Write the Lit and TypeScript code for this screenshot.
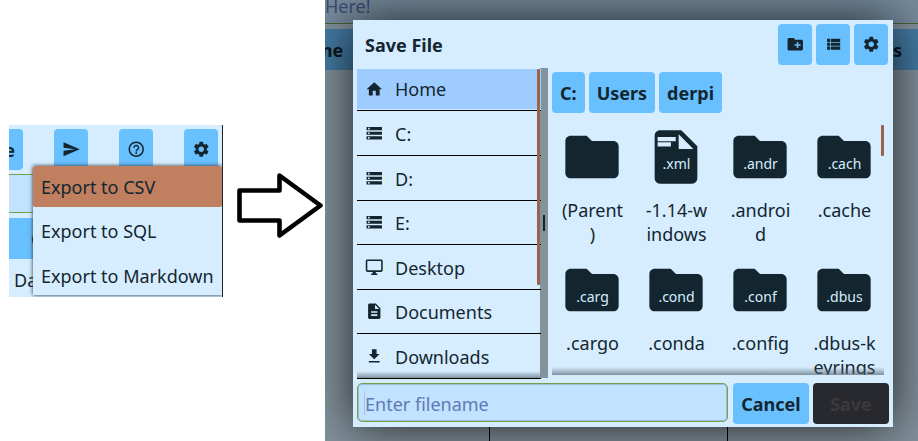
import { LitElement, html, css, svg } from "lit";
import { customElement, property } from "lit/decorators.js";

const ICONS: Record<string, string> = {
  home: "M10 20v-6h4v6h5v-8h3L12 3 2 12h3v8z",
  storage:
    "M2 20h20v-4H2v4zm2-3h2v2H4v-2zM2 4v4h20V4H2zm4 3H4V5h2v2zm-4 7h20v-4H2v4zm2-3h2v2H4v-2z",
  desktop:
    "M21 2H3c-1.1 0-2 .9-2 2v12c0 1.1.9 2 2 2h7v2H8v2h8v-2h-2v-2h7c1.1 0 2-.9 2-2V4c0-1.1-.9-2-2-2zm0 14H3V4h18v12z",
  document:
    "M14 2H6c-1.1 0-1.99.9-1.99 2L4 20c0 1.1.89 2 1.99 2H18c1.1 0 2-.9 2-2V8l-6-6zm2 16H8v-2h8v2zm0-4H8v-2h8v2zm-3-5V3.5L18.5 9H13z",
  download: "M19 9h-4V3H9v6H5l7 7 7-7zM5 18v2h14v-2H5z",
  send: "M2.01 21L23 12 2.01 3 2 10l15 2-15 2z",
  help: "M11 18h2v-2h-2v2zm1-16C6.48 2 2 6.48 2 12s4.48 10 10 10 10-4.48 10-10S17.52 2 12 2zm0 18c-4.41 0-8-3.59-8-8s3.59-8 8-8 8 3.59 8 8-3.59 8-8 8zm0-14c-2.21 0-4 1.79-4 4h2c0-1.1.9-2 2-2s2 .9 2 2c0 2-3 1.75-3 5h2c0-2.25 3-2.5 3-5 0-2.21-1.79-4-4-4z",
  settings:
    "M19.14 12.94c.04-.3.06-.61.06-.94 0-.32-.02-.64-.07-.94l2.03-1.58c.18-.14.23-.41.12-.61l-1.92-3.32c-.12-.22-.37-.29-.59-.22l-2.39.96c-.5-.38-1.03-.7-1.62-.94l-.36-2.54c-.04-.24-.24-.41-.48-.41h-3.84c-.24 0-.43.17-.47.41l-.36 2.54c-.59.24-1.13.57-1.62.94l-2.39-.96c-.22-.08-.47 0-.59.22L2.74 8.87c-.12.21-.08.47.12.61l2.03 1.58c-.05.3-.09.63-.09.94s.02.64.07.94l-2.03 1.58c-.18.14-.23.41-.12.61l1.92 3.32c.12.22.37.29.59.22l2.39-.96c.5.38 1.03.7 1.62.94l.36 2.54c.05.24.24.41.48.41h3.84c.24 0 .44-.17.47-.41l.36-2.54c.59-.24 1.13-.56 1.62-.94l2.39.96c.22.08.47 0 .59-.22l1.92-3.32c.12-.22.07-.47-.12-.61l-2.01-1.58zM12 15.6c-1.98 0-3.6-1.62-3.6-3.6s1.62-3.6 3.6-3.6 3.6 1.62 3.6 3.6-1.62 3.6-3.6 3.6z",
  newFolder:
    "M20 6h-8l-2-2H4c-1.11 0-1.99.89-1.99 2L2 18c0 1.11.89 2 2 2h16c1.11 0 2-.89 2-2V8c0-1.11-.89-2-2-2zm-1 8h-3v3h-2v-3h-3v-2h3V9h2v3h3v2z",
  list: "M4 14h4v-4H4v4zm0 5h4v-4H4v4zM4 9h4V5H4v4zm5 5h12v-4H9v4zm0 5h12v-4H9v4zM9 5v4h12V5H9z",
  folder:
    "M10 4H4c-1.1 0-1.99.9-1.99 2L2 18c0 1.1.9 2 2 2h16c1.1 0 2-.9 2-2V8c0-1.1-.9-2-2-2h-8l-2-2z",
  file: "M14 2H6c-1.1 0-2 .9-2 2v16c0 1.1.9 2 2 2h12c1.1 0 2-.9 2-2V8l-6-6zM13 9V3.5L18.5 9H13zM5.1 4.5v1.6h6.8V4.5zM5.1 6.5v1.6h5V6.5z",
};

@customElement("ui-icon")
class UiIcon extends LitElement {
  @property() name = "home";
  static styles = css`
    :host { display: block; flex: none; width: 18.5px; height: 18.5px; color: #13262f; }
    svg { display: block; width: 100%; height: 100%; fill: currentColor; }
  `;
  render() {
    return html`<svg viewBox="0 0 24 24">${svg`<path fill-rule="evenodd" d=${ICONS[this.name]} />`}</svg>`;
  }
}

@customElement("export-panel")
class ExportPanel extends LitElement {
  static styles = css`
    :host {
      display: block; position: relative; box-sizing: border-box; overflow: hidden;
      width: 214px; height: 172px; background: #d6edff; border-right: 1px solid #1c2429;
    }
    .bar { display: flex; gap: 31px; padding-top: 4px; }
    .btn {
      box-sizing: border-box; width: 34px; height: 41px; border-radius: 4px; background: #69c0ff;
      display: flex; align-items: center; justify-content: center; padding-bottom: 1px;
    }
    .btn.cut {
      width: 14px; border-radius: 0 4px 4px 0; font-weight: 700; justify-content: flex-end;
      padding: 2px 8px 0 0;
    }
    .field { height: 37px; margin-top: 4px; background: #c1e3ff; border: solid #75a04b; border-width: 1px 0; }
    .head { height: 41px; margin-top: 5px; background: #69c0ff; font-weight: 700; line-height: 42px; padding-left: 22px; }
    .cell { padding-left: 5px; line-height: 42px; }
    .menu {
      position: absolute; left: 24px; top: 41px; width: 189px; height: 129px;
      background: #d6edff; box-shadow: 0 0 4px #22303a;
    }
    .item { height: 41px; line-height: 42px; padding-left: 8px; margin-bottom: 4px; white-space: nowrap; border-radius: 2px; }
    .item.on { background: #c07f5f; margin-bottom: 3px; }
    .item:nth-child(2) { margin-bottom: 4px; }
  `;
  render() {
    return html`
      <div class="bar">
        <div class="btn cut">e</div>
        ${["send", "help", "settings"].map((n) => html`<div class="btn"><ui-icon name=${n}></ui-icon></div>`)}
      </div>
      <div class="field"></div>
      <div class="head">C</div>
      <div class="cell">Da</div>
      <div class="menu">
        ${["CSV", "SQL", "Markdown"].map(
          (f, i) => html`<div class="item ${i === 0 ? "on" : ""}">Export to ${f}</div>`
        )}
      </div>
    `;
  }
}

const PLACES = [
  ["home", "Home"],
  ["storage", "C:"],
  ["storage", "D:"],
  ["storage", "E:"],
  ["desktop", "Desktop"],
  ["document", "Documents"],
  ["download", "Downloads"],
];

const FILES: { icon: string; tag: string; lines: string[] }[] = [
  { icon: "folder", tag: "", lines: ["(Parent", ")"] },
  { icon: "file", tag: ".xml", lines: ["-1.14-w", "indows"] },
  { icon: "folder", tag: ".andr", lines: [".androi", "d"] },
  { icon: "folder", tag: ".cach", lines: [".cache"] },
  { icon: "folder", tag: ".carg", lines: [".cargo"] },
  { icon: "folder", tag: ".cond", lines: [".conda"] },
  { icon: "folder", tag: ".conf", lines: [".config"] },
  { icon: "folder", tag: ".dbus", lines: [".dbus-k", "eyrings"] },
];

@customElement("save-dialog")
class SaveDialog extends LitElement {
  static styles = css`
    :host {
      display: flex; flex-direction: column; box-sizing: border-box; width: 540px; height: 407px;
      padding: 4px 4px 3px; background: #d6edff; box-shadow: 0 0 46px rgba(0, 0, 0, 0.77);
    }
    .top { display: flex; align-items: center; gap: 4px; height: 41px; padding: 0 1px 0 8px; }
    .title { flex: 1; font-weight: 700; padding-top: 2px; }
    .btn {
      display: flex; align-items: center; justify-content: center; box-sizing: border-box;
      height: 41px; border-radius: 4px; background: #69c0ff; font-weight: 700;
    }
    .tool { width: 34px; padding-bottom: 1px; }
    .main { display: flex; height: 311px; margin-top: 3px; }
    .side { position: relative; width: 184px; padding-top: 1px; }
    .place {
      display: flex; align-items: center; gap: 11.5px; box-sizing: border-box; height: 45px;
      padding: 2px 0 0 8px; border-bottom: 1px solid #000;
    }
    .place:nth-child(4), .place:nth-child(6) { height: 44px; }
    .place ui-icon { margin-top: -2px; }
    .place.on {
      height: 42px; padding-top: 0;
      background: #9fccff linear-gradient(#d6edff, #d6edff) bottom / 100% 1px no-repeat;
      background-clip: padding-box;
    }
    .place.on ui-icon { margin-top: 0; }
    .fade { position: absolute; height: 8px; background: linear-gradient(rgba(82, 97, 108, 0), rgba(82, 97, 108, 0.65)); }
    .side .fade { left: 0; width: 183px; top: 303px; height: 7px; }
    .thumb { position: absolute; background: #97644a; width: 3px; border-radius: 1px; }
    .side .thumb { left: 180px; top: 1px; height: 216px; }
    .split {
      width: 8px; height: 310px; margin-left: -1px; background: #84929c;
      display: flex; align-items: center;
    }
    .grip { width: 2px; height: 16px; margin-left: 3px; background: #13262f; }
    .right { flex: 1; padding: 4px 0 0 4px; }
    .crumbs { display: flex; gap: 4px; }
    .crumb { padding: 2px 8px 0; }
    .files { position: relative; overflow: hidden; width: 332px; height: 258px; margin-top: 4px; }
    .grid { display: grid; grid-template-columns: repeat(4, 84px); grid-auto-rows: 133px; margin-left: -2px; padding-top: 8px; }
    .file { display: flex; flex-direction: column; align-items: center; }
    .pic { position: relative; height: 64px; }
    .pic ui-icon { width: 64px; height: 64px; }
    .tag { position: absolute; left: 0; right: 0; top: 28px; text-align: center; line-height: 22px; font-size: 14px; color: #d6edff; padding-left: 1px; }
    .name { margin-top: 9px; padding-left: 1px; text-align: center; line-height: 24px; white-space: pre; }
    .files .fade { left: 0; right: 0; bottom: 0; }
    .files .thumb { right: 0; top: 8px; height: 31px; }
    .bottom { display: flex; gap: 4px; margin-top: 4px; }
    .input {
      box-sizing: border-box; width: 371px; height: 39px; margin-right: 1px; border: 1px solid #75a04b; border-radius: 5px;
      background: #c1e3ff; box-shadow: inset 0 0 0 1px #9dbfd0; color: #6178b5; line-height: 40px; padding-left: 7px;
    }
    .input::before {
      content: ""; display: block; float: left; width: 1px; height: 24px; margin: 7px -1px 0 -1px; background: #a3c4e4;
    }
    .act { width: 76px; padding-top: 2px; }
    .off { background: #28292e; color: #3a3a3b; }
  `;
  render() {
    return html`
      <div class="top">
        <div class="title">Save File</div>
        ${["newFolder", "list", "settings"].map(
          (n) => html`<div class="btn tool"><ui-icon name=${n}></ui-icon></div>`
        )}
      </div>
      <div class="main">
        <div class="side">
          ${PLACES.map(
            ([icon, label], i) => html`<div class="place ${i === 0 ? "on" : ""}">
              <ui-icon name=${icon}></ui-icon><span>${label}</span>
            </div>`
          )}
          <div class="fade"></div>
          <div class="thumb"></div>
        </div>
        <div class="split"><div class="grip"></div></div>
        <div class="right">
          <div class="crumbs">
            ${["C:", "Users", "derpi"].map((c) => html`<div class="btn crumb">${c}</div>`)}
          </div>
          <div class="files">
            <div class="grid">
              ${FILES.map(
                (f) => html`<div class="file">
                  <div class="pic"><ui-icon name=${f.icon}></ui-icon><div class="tag">${f.tag}</div></div>
                  <div class="name">${f.lines.join("\n")}</div>
                </div>`
              )}
            </div>
            <div class="fade"></div>
            <div class="thumb"></div>
          </div>
        </div>
      </div>
      <div class="bottom">
        <div class="input">Enter filename</div>
        <div class="btn act">Cancel</div>
        <div class="btn act off">Save</div>
      </div>
    `;
  }
}

@customElement("app-root")
class AppRoot extends LitElement {
  static styles = css`
    :host {
      display: flex; width: 918px; height: 441px; overflow: hidden; background: #fff;
      font: 18px/1.36 "Noto Sans", sans-serif; color: #13262f;
    }
    .left { padding: 125px 0 0 9px; width: 214px; }
    .arrow { width: 102px; height: 441px; display: flex; align-items: center; }
    .arrow svg { width: 102px; height: 90px; margin-top: -31px; }
    .window { position: relative; flex: 1; overflow: hidden; background: #84929c; }
    .strip { height: 23px; background: #768c9e; border-bottom: 1px solid #4c6232; color: #3d4b75; }
    .strip span { display: block; line-height: 12px; }
    .cols {
      display: flex; justify-content: space-between; align-items: center; height: 41px; margin-top: 5px;
      box-sizing: border-box; padding: 2px 16px 0 0; background: #447ba4; font-weight: 700; color: #0b161c;
    }
    .cols span:first-child { margin-left: -10px; }
    .table { display: grid; grid-template-columns: 165px 238px 1fr; height: 371px; }
    .table div { border-right: 1px solid #000; }
    .table div:last-child { border: 0; }
    save-dialog { position: absolute; left: 28px; top: 20px; }
  `;
  render() {
    return html`
      <div class="left"><export-panel></export-panel></div>
      <div class="arrow">
        <svg viewBox="0 0 102 90">
          <path
            d="M16.5 30.5H56.5V15.5L97.5 45.5L56.5 75.5V60.5H16.5Z"
            fill="none" stroke="#000" stroke-width="4.6" stroke-linejoin="round"
          />
        </svg>
      </div>
      <div class="window">
        <div class="strip"><span>Here!</span></div>
        <div class="cols"><span>me</span><span>s</span></div>
        <div class="table"><div></div><div></div><div></div></div>
        <save-dialog></save-dialog>
      </div>
    `;
  }
}
